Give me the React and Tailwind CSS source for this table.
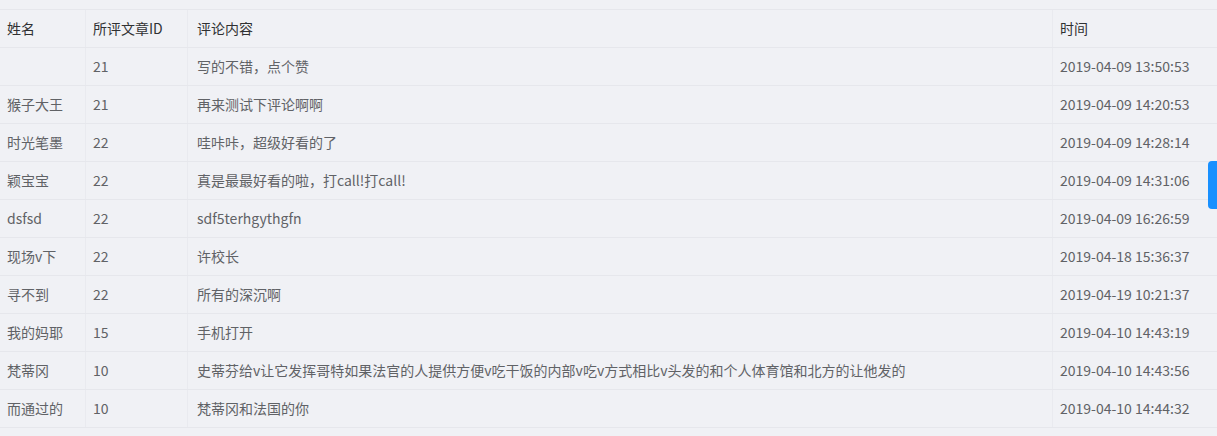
import React from 'react';

const rows = [
  { name: '', id: '21', content: '写的不错，点个赞', time: '2019-04-09 13:50:53' },
  { name: '猴子大王', id: '21', content: '再来测试下评论啊啊', time: '2019-04-09 14:20:53' },
  { name: '时光笔墨', id: '22', content: '哇咔咔，超级好看的了', time: '2019-04-09 14:28:14' },
  { name: '颖宝宝', id: '22', content: '真是最最好看的啦，打call!打call!', time: '2019-04-09 14:31:06' },
  { name: 'dsfsd', id: '22', content: 'sdf5terhgythgfn', time: '2019-04-09 16:26:59' },
  { name: '现场v下', id: '22', content: '许校长', time: '2019-04-18 15:36:37' },
  { name: '寻不到', id: '22', content: '所有的深沉啊', time: '2019-04-19 10:21:37' },
  { name: '我的妈耶', id: '15', content: '手机打开', time: '2019-04-10 14:43:19' },
  { name: '梵蒂冈', id: '10', content: '史蒂芬给v让它发挥哥特如果法官的人提供方便v吃干饭的内部v吃v方式相比v头发的和个人体育馆和北方的让他发的', time: '2019-04-10 14:43:56' },
  { name: '而通过的', id: '10', content: '梵蒂冈和法国的你', time: '2019-04-10 14:44:32' },
];

const cols = 'grid grid-cols-[86px_102px_865px_1fr]';

export default function App() {
  return (
    <div
      className="relative w-[1217px] h-[436px] overflow-hidden bg-[#f0f1f5] pt-[9px] text-[14px]"
      style={{ fontFamily: '"Noto Sans CJK SC", "Noto Sans", sans-serif' }}
    >
      <div className="border-t border-[#e6e7ec]">
        {/* Header */}
        <div className={`${cols} h-[38px] border-b border-[#e6e7ec] text-[#303133]`}>
          <div className="flex items-center pl-[7px] border-r border-[#e9eaef]">姓名</div>
          <div className="flex items-center pl-[7px] border-r border-[#e9eaef]">所评文章ID</div>
          <div className="flex items-center pl-[9px] border-r border-[#e9eaef]">评论内容</div>
          <div className="flex items-center pl-[7px]">时间</div>
        </div>
        {rows.map((r, i) => (
          <div key={i} className={`${cols} h-[38px] border-b border-[#e6e7ec] text-[#606266]`}>
            <div className="flex items-center pl-[7px] border-r border-[#e9eaef] whitespace-nowrap">{r.name}</div>
            <div className="flex items-center pl-[7px] border-r border-[#e9eaef]">{r.id}</div>
            <div className="flex items-center pl-[9px] border-r border-[#e9eaef] whitespace-nowrap">{r.content}</div>
            <div className="flex items-center pl-[7px] whitespace-nowrap">{r.time}</div>
          </div>
        ))}
      </div>
      {/* side tab */}
      <div className="absolute right-0 top-[161px] w-[9px] h-[48px] bg-[#1890ff] rounded-l-[4px]" />
    </div>
  );
}
